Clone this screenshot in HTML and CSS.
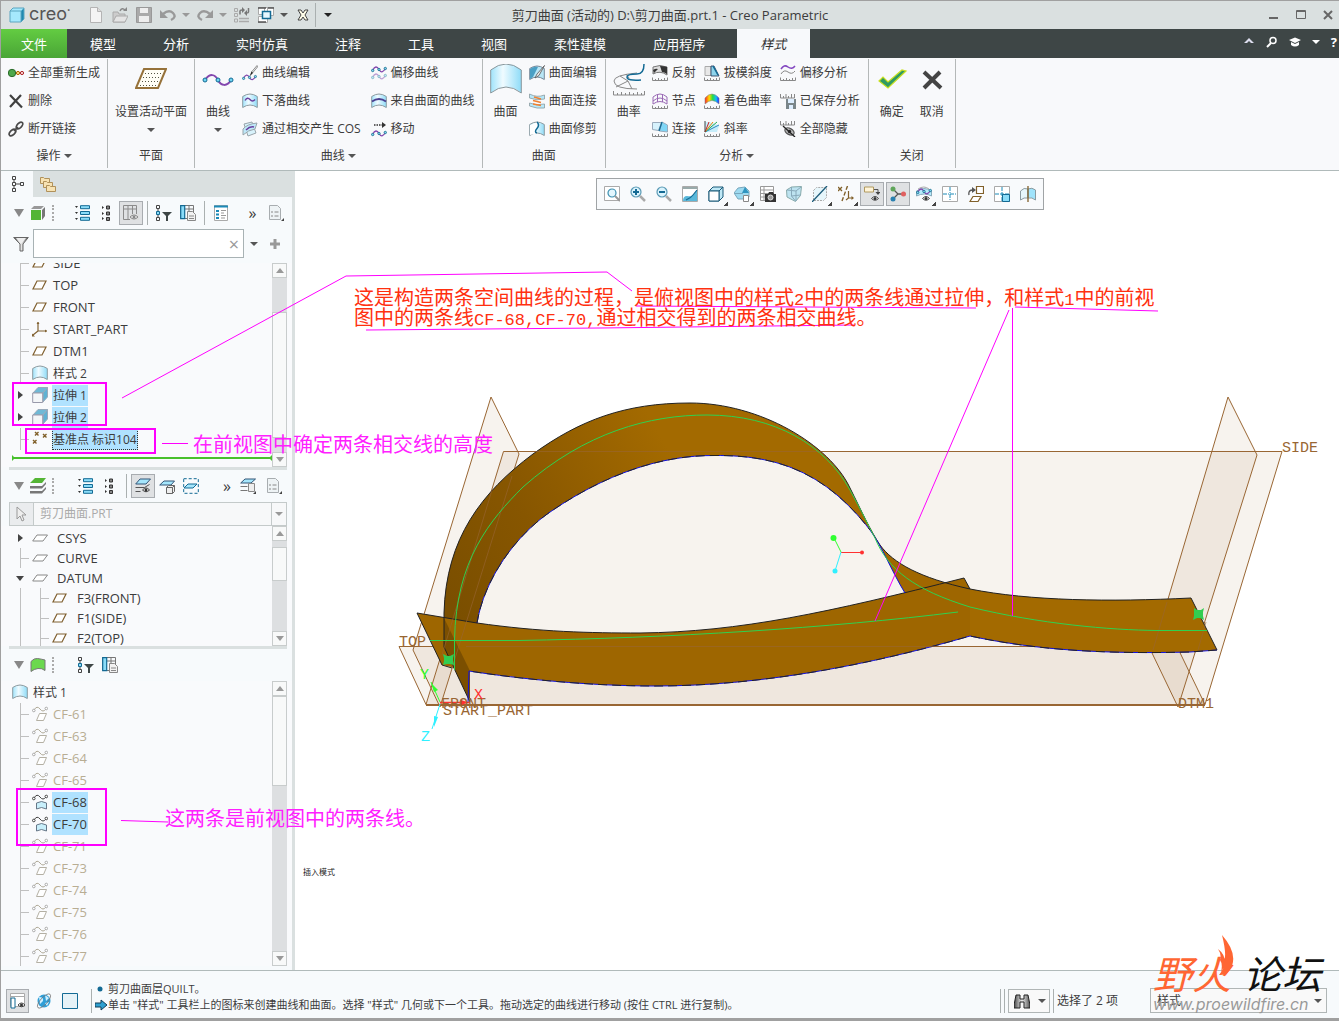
FILE: index.html
```html
<!DOCTYPE html>
<html lang="zh-CN">
<head>
    <meta charset="UTF-8">
    <meta name="viewport" content="width=device-width, initial-scale=1.0">
    <title>剪刀曲面 - Creo Parametric</title>
    <link rel="stylesheet" href="styles.css">
</head>
<body>

<!-- icones -->
<svg class="defs" width="0" height="0" aria-hidden="true">
    <defs>
        <linearGradient id="g-blue"><stop offset="0" stop-color="#9fe3fb"/><stop offset=".4" stop-color="#f0fbff"/><stop offset="1" stop-color="#8fdcf8"/></linearGradient>
        <linearGradient id="g-arch" gradientUnits="userSpaceOnUse" x1="450" y1="600" x2="680" y2="470"><stop offset="0" stop-color="#7b4f00"/><stop offset=".4" stop-color="#875600"/><stop offset="1" stop-color="#a36a00"/></linearGradient>
        <linearGradient id="g-rain"><stop offset="0" stop-color="#f22"/><stop offset=".3" stop-color="#fd0"/><stop offset=".55" stop-color="#2d4"/><stop offset=".8" stop-color="#1bf"/><stop offset="1" stop-color="#22f"/></linearGradient>
        <linearGradient id="g-metal"><stop offset="0" stop-color="#444"/><stop offset=".5" stop-color="#eee"/><stop offset="1" stop-color="#555"/></linearGradient>

        <symbol id="ruler" viewBox="0 0 16 16"><path d="M.5 12.500v3h15v-3M3.500 14v1M6.500 13v2M9.500 14v1M12.500 13v2" fill="none" stroke="#888"/></symbol>
        <symbol id="eye" viewBox="0 0 16 16"><path d="M1 8q7-8 14 0q-7 7-14 0z" fill="#fff" stroke="#444" stroke-width="2"/><circle cx="8" cy="8" r="3" fill="#333"/></symbol>
        <symbol id="wave" viewBox="0 0 16 8"><path d="M1.500 5.500C4 1 6 1 8 4.500S12 7.500 14.500 3.500" fill="none" stroke="#8347ae" stroke-width="1.300"/><g fill="#7fd8ee" stroke="#17688c" stroke-width=".8"><circle cx="1.700" cy="5.500" r="1.200"/><circle cx="8" cy="4.500" r="1.200"/><circle cx="14.300" cy="3.500" r="1.200"/></g></symbol>

        <symbol id="cube" viewBox="0 0 16 16"><path d="M1 4l3-3h11v11l-3 3H1z" fill="#a5e9fd"/><path d="M12 4l3-3v11l-3 3z" fill="#1f89b0"/><path d="M1 4h11v11H1zL4 1h11v11l-3 3" fill="none" stroke="#5aa5c0"/></symbol>
        <symbol id="new" viewBox="0 0 16 16"><path d="M2.500.5h7l4 4v11h-11z" fill="#f4f4f4" stroke="#b4b4b4"/><path d="M9.500.5v4h4" fill="#ddd" stroke="#b4b4b4"/></symbol>
        <symbol id="open" viewBox="0 0 16 16"><path d="M1 15V5h5l1 2h6v8z" fill="#ccc" stroke="#aaa"/><path d="M1 15l3-6h12l-3 6z" fill="#e4e4e4" stroke="#aaa"/><path d="M8 4q2-4 5-1" fill="none" stroke="#888" stroke-width="1.500"/><path d="M11 4h4V0z" fill="#888"/></symbol>
        <symbol id="save" viewBox="0 0 16 16"><path d="M.5.5h15v15H.5z" fill="#aaa" stroke="#999"/><path d="M4 1h8v5H4zM3 9h10v6H3z" fill="#eee"/></symbol>
        <symbol id="undo" viewBox="0 0 16 16"><path d="M3 7q6-5 10-1t-2 7" fill="none" stroke="#999" stroke-width="2.400"/><path d="M0 3v8h8z" fill="#999"/></symbol>
        <symbol id="redo" viewBox="0 0 16 16"><path d="M13 7q-6-5-10-1t2 7" fill="none" stroke="#999" stroke-width="2.400"/><path d="M16 3v8H8z" fill="#999"/></symbol>
        <symbol id="regenlist" viewBox="0 0 16 16"><path d="M.5 1.500h3v3h-3zM.5 6.500h3v3h-3zM.5 12h3v3h-3z" fill="none" stroke="#aaa"/><path d="M5 11.500h10M5 14.500h10" stroke="#aaa" stroke-width="1.500"/><path d="M6 7.500V4q0-1 2-1M14.500 1v4q0 1-2 1" fill="none" stroke="#777" stroke-width="1.500"/><path d="M8 0v6l3-3zM13 3v6l-3-3z" fill="#777"/></symbol>
        <symbol id="windows" viewBox="0 0 16 16"><path d="M6.500.5h9v8h-9zM.5.5h9v7h-9zM.5 9.500h9v6h-9z" fill="#fff" stroke="#aaa"/><path d="M10 1h6M0 1h8M0 15h8" stroke="#555" stroke-width="1.500"/><path d="M4.500 4.500h8v7h-8z" fill="#e6f7ff" stroke="#136a94" stroke-width="1.500"/></symbol>
        <symbol id="closex" viewBox="0 0 16 16"><path d="M3 3h3l2 3 2-3h3l-3 5 3 5h-3l-2-3-2 3H3l3-5z" fill="#fffde8" stroke="#444"/></symbol>

        <symbol id="regen" viewBox="0 0 16 16"><circle cx="4" cy="8" r="3.700" fill="#4ea84a" stroke="#2a6a2a"/><circle cx="10" cy="8" r="1.600" fill="#fd8" stroke="#a60"/><circle cx="14" cy="8" r="1.600" fill="#fdd" stroke="#a22"/></symbol>
        <symbol id="del" viewBox="0 0 16 16"><path d="M2 2l12 12.500M13 2L2 14" stroke="#404040" stroke-width="2.200" fill="none"/></symbol>
        <symbol id="unlink" viewBox="0 0 16 16"><g fill="none" stroke="#4a4a4a" stroke-width="1.700"><ellipse cx="11.500" cy="4.500" rx="4" ry="2.300" transform="rotate(-45 11.500 4.500)"/><ellipse cx="4.500" cy="11.500" rx="4" ry="2.300" transform="rotate(-45 4.500 11.500)"/><path d="M6 10l4-4"/></g></symbol>
        <symbol id="cedit" viewBox="0 0 16 16"><path d="M15 .5L9.500 7l1 1L15.500 2z" fill="#eee" stroke="#777" stroke-width=".8"/><path d="M9.500 6.500l1.500 1.500-3.500 3.500z" fill="#222"/><use href="#wave" y="8" width="15" height="8"/></symbol>
        <symbol id="surf" viewBox="0 0 16 16"><path d="M.7 3.500Q8-1.500 15.300 3.500V14.500Q8 9.500.7 14.500z" fill="url(#g-blue)" stroke="#8d9a9f"/></symbol>
        <symbol id="drop" viewBox="0 0 16 16"><use href="#surf"/><path d="M3 7.500q2.500-4 5-1t5 0" fill="none" stroke="#6a3fa0" stroke-width="1.400"/></symbol>
        <symbol id="cos" viewBox="0 0 16 16"><path d="M2 3l8-2 4 11-8 3z" fill="#d8f2fb" stroke="#99a4aa"/><path d="M1 8Q5 3 15 2L13 8Q6 9 1 14z" fill="#bde8f8" stroke="#99a4aa"/><path d="M4 9q4-4 8-3" fill="none" stroke="#6a3fa0" stroke-width="1.400"/></symbol>
        <symbol id="offset" viewBox="0 0 16 16"><use href="#wave" width="16" height="8"/><use href="#wave" width="16" height="8" y="7" opacity=".5"/></symbol>
        <symbol id="fromsurf" viewBox="0 0 16 16"><use href="#surf"/><path d="M1 8.500q7-5 14 0" fill="none" stroke="#4a3f90" stroke-width="1.800"/></symbol>
        <symbol id="move" viewBox="0 0 16 16"><path d="M3 4h8" stroke="#333" stroke-width="1.600" stroke-dasharray="1.500 1"/><path d="M11 1l4 3-4 3z" fill="#333"/><use href="#wave" y="8" width="16" height="8"/></symbol>
        <symbol id="sedit" viewBox="0 0 16 16"><path d="M.7 3.500Q8-1.500 15.300 3.500V14.500Q8 9.500.7 14.500z" fill="#b8e6f6" stroke="#789"/><path d="M1 4Q5 1 9 2L4 12l-3 2z" fill="#4a9fc4"/><path d="M15.500.5L8 9l-2 4 4-2.500z" fill="#e6e6e6" stroke="#555" stroke-width=".8"/></symbol>
        <symbol id="sconn" viewBox="0 0 16 16"><path d="M.5 1Q8 5 15.500 2v4Q8 8 .5 5zM.5 10q7 3 15 1v4Q8 16 .5 13z" fill="#b7e9fa" stroke="#8a9aa0" stroke-width=".8"/><path d="M5 4l7 2M4 7.500l8 2M4 11l8 1.500" stroke="#f08030" stroke-width="1.500"/></symbol>
        <symbol id="strim" viewBox="0 0 16 16"><use href="#surf"/><path d="M8 1.500q3 3 0 6t0 5l-7 1.500V4z" fill="#fff"/><path d="M8 1q3 3 0 6.500T8 12" fill="none" stroke="#136a94" stroke-width="1.500"/></symbol>
        <symbol id="refl" viewBox="0 0 16 16"><path d="M1 2Q8-1 15 2v8Q8 5 1 9z" fill="#ddd" stroke="#777"/><path d="M8 1q4 0 7 1v7q-3-2-5-2zM1 5q3-2 5-1L2 8z" fill="#333"/><use href="#ruler"/></symbol>
        <symbol id="node" viewBox="0 0 16 16"><path d="M1 4q7-6 14 0M1 8q7-6 14 0M1 11q7-5 14 0M1 4v7M5.500 2v7M10.500 2v7M15 4v7" fill="none" stroke="#9a6ab5"/><use href="#ruler"/></symbol>
        <symbol id="conn" viewBox="0 0 16 16"><path d="M.5 1.500h9l-3 8-6-1z" fill="#d6f2fc" stroke="#9ab"/><path d="M10 1l5.500 3v7l-8-1z" fill="#7fd6f6" stroke="#9ab"/><path d="M10 1L7 10" stroke="#136a94" stroke-width="1.300"/><use href="#ruler"/></symbol>
        <symbol id="draft" viewBox="0 0 16 16"><path d="M1 10.500V1.500h6v9z" fill="#e8e8e8" stroke="#aaa"/><path d="M7 1h3l5 10H7z" fill="#8fd4ec" stroke="#235" stroke-width=".8"/><path d="M9 1l5 9" stroke="#136a94" stroke-width="1.500"/><use href="#ruler"/></symbol>
        <symbol id="shade" viewBox="0 0 16 16"><path d="M1 5Q8-3 15 5v6Q8 4 1 11z" fill="url(#g-rain)" stroke="#888" stroke-width=".6"/><use href="#ruler"/></symbol>
        <symbol id="slope" viewBox="0 0 16 16"><path d="M1 11V1q8 0 14 4l-2 6z" fill="#c7edfa"/><path d="M1 11L15 4" stroke="#2a8ac0"/><path d="M1 11L13 1" stroke="#2a5"/><path d="M1 11L9 1" stroke="#e80"/><path d="M1 11L5 1" stroke="#c22"/><path d="M1 0v11" stroke="#444" fill="none"/><use href="#ruler"/></symbol>
        <symbol id="offan" viewBox="0 0 16 16"><path d="M1 4q3-5 7-2t7-1" fill="none" stroke="#8347c0" stroke-width="1.500"/><path d="M1 9q3-5 7-2t7-1" fill="none" stroke="#888"/><use href="#ruler"/></symbol>
        <symbol id="saved" viewBox="0 0 16 16"><path d="M.5 1v4h14V1M3.500 3v2M6 1v4M8.500 3v2M11.500 1v4" fill="none" stroke="#888"/><path d="M6 6h10v10H6z" fill="#7a868a"/><path d="M8 6h6v4H8zM9 12h4v4H9z" fill="#def"/></symbol>
        <symbol id="hideall" viewBox="0 0 16 16"><path d="M.5 0v4h14V0M3.500 2v2M6 0v4M8.500 2v2M11.500 0v4" fill="none" stroke="#888"/><ellipse cx="9.500" cy="10.500" rx="5" ry="3" transform="rotate(30 9.500 10.500)" fill="#bbb" stroke="#555" stroke-width="1.300"/><circle cx="9.500" cy="10.500" r="1.700" fill="#222"/><path d="M3 5l12 11" stroke="#222" stroke-width="1.300"/></symbol>

        <symbol id="tree" viewBox="0 0 16 16"><path d="M2.500 0.500h3v3h-3zM2.500 6.500h3v3h-3zM2.500 12.500h3v3h-3zM10.500 6.500h3v3h-3zM4 4v2M4 10v2M6 8h4" fill="none" stroke="#444"/></symbol>
        <symbol id="folders" viewBox="0 0 16 16"><g fill="#f7e2b2" stroke="#b0915a"><path d="M.5 1.500h3l1 1h5v5h-9z"/><path d="M3.500 5.500h3l1 1h5v5h-9z"/><path d="M6.500 9.500h3l1 1h5v5h-9z"/></g></symbol>
        <symbol id="gcube" viewBox="0 0 16 16"><path d="M1 5h10v10H1z" fill="#54b535"/><path d="M1 4l3-3h10l-3 3z" fill="#999"/><path d="M12 5l3-3v9l-3 4z" fill="#777"/></symbol>
        <symbol id="list" viewBox="0 0 16 16"><path d="M0 1h3L1.500 3zM0 7h3L1.500 9zM0 13h3l-1.500 2z" fill="#333"/><path d="M5.500.7h9v3h-9zM5.500 6.500h9v3h-9zM5.500 12.300h9v3h-9z" fill="#8adcf8" stroke="#136a94"/></symbol>
        <symbol id="dots" viewBox="0 0 16 16"><path d="M3 1l2 1.500L3 4zM3 7l2 1.500L3 10zM3 12l2 1.500L3 15z" fill="#333"/><path d="M7.500 1h3v3h-3zM7.500 7h3v3h-3zM7.500 12.500h3v3h-3z" fill="#888" stroke="#333"/></symbol>
        <symbol id="colseye" viewBox="0 0 16 16"><path d="M.5.5h13v14H.5zM.5 4h13M5 .5v14M9.500.5v14" fill="none" stroke="#8b8b8b"/><path d="M7 9h9v6H7z" fill="#ddd"/><path d="M7 12q4-4 8 0q-4 4-8 0z" fill="#eee" stroke="#888"/><circle cx="11" cy="12" r="1.500" fill="#888"/></symbol>
        <symbol id="tfilter" viewBox="0 0 16 16"><path d="M.5.5h3v3h-3zM.5 12.500h3v3h-3zM2 4v8" fill="none" stroke="#444"/><path d="M.5 6.500h3v3h-3z" fill="#8adcf8" stroke="#136a94"/><path d="M6 7h10l-4 4v5h-2v-5z" fill="#3e4646"/></symbol>
        <symbol id="colsdoc" viewBox="0 0 16 16"><path d="M.5.5h13v13H.5zM.5 4h13M9 .5v13" fill="none" stroke="#777"/><path d="M.7.7h4v13h-4z" fill="#8adcf8" stroke="#136a94" stroke-width="1.200"/><path d="M7.500 6.500h5l3 3v6h-8z" fill="#f2f2f2" stroke="#888"/><path d="M9 11h5M9 13.500h5" stroke="#888"/></symbol>
        <symbol id="props" viewBox="0 0 16 16"><path d="M1.500.5h13v15h-13z" fill="#fff" stroke="#aaa"/><path d="M1 1.500h14" stroke="#1b8ab8" stroke-width="2"/><path d="M3 5h3v2H3zM3 8.500h3v2H3zM3 12h3v2H3z" fill="#1b8ab8"/><path d="M8 5.500h5M8 8h3M8 10.500h5M8 13h4" stroke="#999"/></symbol>
        <symbol id="doc" viewBox="0 0 16 16"><path d="M1.500.5h8l3 3v11h-11z" fill="#eef3f5" stroke="#a8adb0"/><path d="M3 7h2M3 11h2M6.500 7h4M6.500 11h4" stroke="#888"/><path d="M16 13v3h-3z" fill="#444"/></symbol>
        <symbol id="funnel" viewBox="0 0 16 16"><path d="M.7 1.500h14.600L10 8v7H7V8z" fill="url(#g-metal)" stroke="#666"/><path d="M3 2h10l-4 5H7z" fill="#eee"/></symbol>
        <symbol id="plane" viewBox="0 0 16 16"><path d="M5 4h9l-4 8H1z" fill="#fff" stroke="#806030" stroke-width="1.200"/></symbol>
        <symbol id="csys" viewBox="0 0 16 16"><path d="M6 1v9h9M6 10l-5 4" fill="none" stroke="#806030" stroke-width="1.200"/><path d="M4.500 3L6 1l1.500 2zM13 8.500l2 1.500-2 1.500zM0 12.500v3h3z" fill="#806030"/></symbol>
        <symbol id="extr" viewBox="0 0 16 16"><path d="M1 6l5-5.500h9.500L11 6z" fill="#6fb9d6" stroke="#9ab"/><path d="M11 6l4.500-5.500V10L11 15z" fill="#5fb2d3" stroke="#9ab"/><path d="M.7 6h10v9.500H.7z" fill="#f4f6f8" stroke="#99a"/></symbol>
        <symbol id="pts" viewBox="0 0 16 16"><path d="M3 1l3.500 3.500M6.500 1L3 4.500M11 3l3.500 3.500M14.500 3L11 6.500M1 9l3.500 3.500M4.500 9L1 12.500" stroke="#80602a" stroke-width="1.400"/></symbol>
        <symbol id="layer" viewBox="0 0 16 16"><path d="M5 5h10.500L11 11H.7z" fill="#fff" stroke="#888"/></symbol>
        <symbol id="cf" viewBox="0 0 16 16"><path d="M2 4Q5-1 8 3T14 3" fill="none" stroke="#b0aa98"/><circle cx="1.800" cy="4.500" r="1.300" fill="#fff" stroke="#a9a9a9"/><circle cx="14.300" cy="2.500" r="1.300" fill="#fff" stroke="#a9a9a9"/><path d="M7.500 7.500h7l-3 7h-7z" fill="#fff" stroke="#b4b0a4"/></symbol>
        <symbol id="cfon" viewBox="0 0 16 16"><path d="M2 4Q5-1 8 3T14 3" fill="none" stroke="#444"/><circle cx="1.800" cy="4.500" r="1.300" fill="#fff" stroke="#444"/><circle cx="14.300" cy="2.500" r="1.300" fill="#fff" stroke="#444"/><path d="M4.500 9q5-3 10 0v6q-5-3-10 0z" fill="#c8effb" stroke="#678"/></symbol>
        <symbol id="layersg" viewBox="0 0 16 16"><path d="M5 0h11l-4 5H0z" fill="#54b535"/><path d="M0 8h12l4-4v2l-4 4.500H0zM0 13h12l4-4v2l-4 4.500H0z" fill="#777"/></symbol>
        <symbol id="layeye" viewBox="0 0 16 16"><path d="M5 1h10.500L11 6H.7z" fill="#a5e6fc" stroke="#357"/><path d="M.5 9.500h9l5-3M.5 13.500h5" fill="none" stroke="#555"/><use href="#eye" x="6" y="8" width="10" height="8"/></symbol>
        <symbol id="laycube" viewBox="0 0 16 16"><path d="M5 3h10.500L12 7H.7z" fill="#a5e6fc" stroke="#357"/><path d="M7.500 9.500h6v6h-6zl2-2h6v6l-2 2M13.500 9.500l2-2" fill="#eee" stroke="#666"/></symbol>
        <symbol id="laysel" viewBox="0 0 16 16"><path d="M.7.7h14.600v14.600H.7z" fill="none" stroke="#136a94" stroke-dasharray="3 2"/><path d="M5 6h9l-4 4H1z" fill="#a5e6fc" stroke="#136a94"/></symbol>
        <symbol id="laydoc" viewBox="0 0 16 16"><path d="M5 1h10.500L11 5H.7z" fill="#a5e6fc" stroke="#357"/><path d="M.5 8.500h7M.5 12.500h7" stroke="#777"/><path d="M8.500 5.500h6v8h-6z" fill="#eee" stroke="#888"/><path d="M16 13v3h-3z" fill="#444"/></symbol>
        <symbol id="gsurf" viewBox="0 0 16 16"><path d="M1 4.500Q4 1 7.500 1.500T15 3v10.500q-3-2.500-7-2t-7 3z" fill="#6bd84e" stroke="#777"/></symbol>
        <symbol id="cursor" viewBox="0 0 16 16"><path d="M4 1v12l3-3 2 5 2-1-2-5h4z" fill="#eee" stroke="#999"/></symbol>

        <symbol id="vfit" viewBox="0 0 16 16"><path d="M.5.5h15v14H.5z" fill="#fff" stroke="#aaa"/><circle cx="8" cy="7" r="4" fill="#e3f6fd" stroke="#3b8fb0" stroke-width="1.200"/><path d="M11 10l5 5" stroke="#999" stroke-width="2"/></symbol>
        <symbol id="vin" viewBox="0 0 16 16"><circle cx="6" cy="6" r="5" fill="#d9f3fd" stroke="#5a9ab5" stroke-width="1.200"/><path d="M3 6h6M6 3v6" stroke="#136a94" stroke-width="2"/><path d="M10 10l5 5" stroke="#aaa" stroke-width="2.500"/></symbol>
        <symbol id="vout" viewBox="0 0 16 16"><circle cx="6" cy="6" r="5" fill="#d9f3fd" stroke="#5a9ab5" stroke-width="1.200"/><path d="M3 6h6" stroke="#136a94" stroke-width="2"/><path d="M10 10l5 5" stroke="#aaa" stroke-width="2.500"/></symbol>
        <symbol id="vpaint" viewBox="0 0 16 16"><path d="M.5.5h15v15H.5z" fill="#fff" stroke="#aaa"/><path d="M1 1h14v2H1z" fill="#9aa"/><path d="M15 4v11H1q0-5 4-5 4 1 6-1z" fill="#5ab8da"/><path d="M4 14q5-2 7-5l4-5" stroke="#136a94" fill="none" stroke-width="1.200"/></symbol>
        <symbol id="vbox" viewBox="0 0 16 16"><path d="M1 5h10v10H1zL5 1h10v10l-4 4M11 5l4-4" fill="#bfe8f6" stroke="#1b5a78"/><path d="M1 5h10v10H1z" fill="#fff" stroke="#1b5a78"/></symbol>
        <symbol id="vsaved" viewBox="0 0 16 16"><path d="M0 7l4-5 7-1 4 4v6l-4 2H4z" fill="#9edaf0" stroke="#7aa8bd"/><path d="M0 7.500h9" stroke="#7aa8bd"/><path d="M11 1l4 6H8z" fill="#2f95c0"/><path d="M9.500 9.500h5v6h-5z" fill="#fff" stroke="#888"/></symbol>
        <symbol id="vcam" viewBox="0 0 16 16"><path d="M.5.5h13v14H.5zM.5 4h13M.5 7.500h13M.5 11h13M4 .5v14" fill="#fff" stroke="#999"/><path d="M5 8h3l1-2h4l1 2h2v8H5z" fill="#333"/><circle cx="10.500" cy="11.500" r="2.500" fill="#999" stroke="#ddd"/></symbol>
        <symbol id="vpersp" viewBox="0 0 16 16"><path d="M.5 4l5-3 10-.5-1 9-5 6L1 11z" fill="#bde3f0" stroke="#8aa"/><path d="M1 4l9 1v10M10 5l5-4M5.500 1v9l4 5M5.500 10l9-1" fill="none" stroke="#8ab"/></symbol>
        <symbol id="vsec" viewBox="0 0 16 16"><path d="M1.500 4.500l3-3h10v10l-3 3h-10z" fill="#e6f6fb" stroke="#aaa" stroke-dasharray="2 1"/><path d="M0 16L15 0" stroke="#1b5a78" stroke-width="1.300"/></symbol>
        <symbol id="vdatum" viewBox="0 0 16 16"><path d="M0 1l4 4M4 1L0 5" stroke="#80602a" stroke-width="1.300"/><path d="M9.500 0L4 15" stroke="#80602a" stroke-width="1.400" stroke-dasharray="4 2"/><path d="M10.500 5v7H15M10.500 12L8 14" fill="none" stroke="#80602a" stroke-width="1.200"/><path d="M13.500 10l2.500 2-2.500 2z" fill="#80602a"/></symbol>
        <symbol id="vannot" viewBox="0 0 16 16"><path d="M.5 1h9v5h-9z" fill="#fff4d8" stroke="#b09a60"/><path d="M10 3.500h4V7" fill="none" stroke="#555"/><path d="M11.500 6h5L14 9z" fill="#444"/><use href="#eye" x="6" y="8.500" width="10" height="8"/></symbol>
        <symbol id="vspin" viewBox="0 0 16 16"><path d="M3 3l5 5-5 5M8 8h5" stroke="#555" stroke-width="1.300" fill="none"/><circle cx="3" cy="3" r="2.500" fill="#5fa55a"/><circle cx="3" cy="13" r="2.500" fill="#2a80b0"/><circle cx="13.500" cy="8" r="2.500" fill="#e06060"/></symbol>
        <symbol id="vdisp" viewBox="0 0 16 16"><path d="M2 3Q8-1 13 3" fill="none" stroke="#aaa"/><path d="M.5 5q7-5 15 0v5q-7-4-15 0z" fill="#b6ecfd" stroke="#8ab"/><use href="#wave" y="1" width="16" height="8"/><use href="#eye" x="5" y="8.500" width="10" height="8"/></symbol>
        <symbol id="vgrid" viewBox="0 0 16 16"><path d="M.5.5h15v15H.5z" fill="#fff" stroke="#aaa"/><path d="M8 1v14M1 8h14" stroke="#1b8ab8" stroke-dasharray="4 1 1 1"/></symbol>
        <symbol id="vrot" viewBox="0 0 16 16"><path d="M8.500.5h7v7h-7zM5 10.500h8l-3 5H2z" fill="#fff" stroke="#80602a" stroke-width="1.200"/><path d="M1 9q-1-5 4-5" fill="none" stroke="#555" stroke-width="1.300"/><path d="M4 1l4 3-4 3z" fill="#555"/></symbol>
        <symbol id="vgrid4" viewBox="0 0 16 16"><path d="M.5.5h15v15H.5z" fill="#fff" stroke="#aaa"/><path d="M9 9h6v6H9z" fill="#8adcf8"/><path d="M8 1v14M1 8h14" stroke="#1b8ab8" stroke-dasharray="4 1"/><path d="M8.500 8.500h7v7h-7z" fill="none" stroke="#136a94"/></symbol>
        <symbol id="vmirror" viewBox="0 0 16 16"><path d="M.5 5Q4 1 8 3v9q-4-1-7.500 2z" fill="#e6f6fb" stroke="#8a9aa0"/><path d="M8 3q4-2 7.500 1v10Q12 11 8 12z" fill="#9fe3fb" stroke="#8a9aa0"/><path d="M8 0v16" stroke="#80602a" stroke-width="1.300"/></symbol>
    </defs>
</svg>

<header class="titlebar">
    <div class="quick">
        <svg class="i"><use href="#cube"/></svg>
        <span class="brand">creo<sup>•</sup></span>
        <button aria-label="新建"><svg class="i"><use href="#new"/></svg></button>
        <button aria-label="打开"><svg class="i"><use href="#open"/></svg></button>
        <button aria-label="保存"><svg class="i"><use href="#save"/></svg></button>
        <button aria-label="撤消"><svg class="i"><use href="#undo"/></svg></button>
        <i class="down gray"></i>
        <button aria-label="重做"><svg class="i"><use href="#redo"/></svg></button>
        <i class="down gray"></i>
        <button aria-label="重新生成"><svg class="i"><use href="#regenlist"/></svg></button>
        <button aria-label="窗口"><svg class="i"><use href="#windows"/></svg></button>
        <i class="down"></i>
        <button aria-label="关闭"><svg class="i"><use href="#closex"/></svg></button>
        <i class="bar"></i>
        <i class="down over"></i>
    </div>
    <h1>剪刀曲面 (活动的) D:\剪刀曲面.prt.1 - Creo Parametric</h1>
    <div class="winbtns">
        <button aria-label="最小化"><svg width="10" height="10"><path d="M0 8h9" stroke="#666" stroke-width="2"/></svg></button>
        <button aria-label="最大化"><svg width="10" height="10"><path d="M.5.5h9v8h-9zM0 1.500h10" fill="none" stroke="#666"/></svg></button>
        <button aria-label="关闭窗口"><svg width="10" height="10"><path d="M1 1l8 8M9 1L1 9" stroke="#666" stroke-width="2"/></svg></button>
    </div>
</header>

<nav class="tabs">
    <button class="file">文件</button>
    <button>模型</button>
    <button>分析</button>
    <button>实时仿真</button>
    <button>注释</button>
    <button>工具</button>
    <button>视图</button>
    <button>柔性建模</button>
    <button>应用程序</button>
    <button class="active">样式</button>
    <div class="help">
        <svg width="12" height="12"><path d="M1 7l5-5 5 5H8L6 5 4 7z" fill="#dde"/></svg>
        <svg width="12" height="12"><circle cx="7" cy="4.500" r="3" fill="none" stroke="#fff" stroke-width="1.500"/><path d="M5 7l-4 4" stroke="#fff" stroke-width="2"/></svg>
        <svg width="12" height="12"><path d="M0 4l6-2.500L12 4 6 7zM2 6l4 2 4-2v3q-4 3-8 0z" fill="#fff"/></svg>
        <i class="down white"></i>
        <b>?</b>
    </div>
</nav>

<div class="ribbon">
    <section class="group g-op">
        <div class="tools">
            <div class="col">
                <button><svg class="i"><use href="#regen"/></svg>全部重新生成</button>
                <button><svg class="i"><use href="#del"/></svg>删除</button>
                <button><svg class="i"><use href="#unlink"/></svg>断开链接</button>
            </div>
        </div>
        <h2>操作<i class="down"></i></h2>
    </section>
    <section class="group g-plane">
        <div class="tools">
            <button class="big"><svg width="32" height="32"><path d="M9 5h22l-8 19H1z" fill="#fffef5" stroke="#96723a" stroke-width="2"/><path d="M10 9.500h17M8 13.500h17M7 17.500h17M5 21.500h17" stroke="#554" stroke-dasharray="1 2" fill="none"/></svg>设置活动平面<i class="down"></i></button>
        </div>
        <h2>平面</h2>
    </section>
    <section class="group g-curve">
        <div class="tools">
            <button class="big"><svg width="32" height="32"><path d="M3 16C8 9 13 10 16 16S25 23 29 16" fill="none" stroke="#8347ae" stroke-width="2"/><g fill="#6fd4f0" stroke="#136a94"><circle cx="3" cy="16" r="2"/><circle cx="16" cy="16" r="2"/><circle cx="29" cy="16" r="2"/></g></svg>曲线<i class="down"></i></button>
            <div class="col">
                <button><svg class="i"><use href="#cedit"/></svg>曲线编辑</button>
                <button><svg class="i"><use href="#drop"/></svg>下落曲线</button>
                <button><svg class="i"><use href="#cos"/></svg>通过相交产生 COS</button>
            </div>
            <div class="col">
                <button><svg class="i"><use href="#offset"/></svg>偏移曲线</button>
                <button><svg class="i"><use href="#fromsurf"/></svg>来自曲面的曲线</button>
                <button><svg class="i"><use href="#move"/></svg>移动</button>
            </div>
        </div>
        <h2>曲线<i class="down"></i></h2>
    </section>
    <section class="group g-surf">
        <div class="tools">
            <button class="big"><svg width="32" height="32"><path d="M.7 6Q16-6 31.300 6V29Q16 17 .7 29z" fill="url(#g-blue)" stroke="#8a979c"/></svg>曲面</button>
            <div class="col">
                <button><svg class="i"><use href="#sedit"/></svg>曲面编辑</button>
                <button><svg class="i"><use href="#sconn"/></svg>曲面连接</button>
                <button><svg class="i"><use href="#strim"/></svg>曲面修剪</button>
            </div>
        </div>
        <h2>曲面</h2>
    </section>
    <section class="group g-ana">
        <div class="tools">
            <button class="big"><svg width="32" height="32"><path d="M24 9Q1 11 1 17q0 8 23 8M7 12l8 5M3 23l12-6M15 17l4 8M13 10l3 4" fill="none" stroke="#888"/><path d="M31 0q0 10-7 10-10 0-10 3 0 4 14 3" fill="none" stroke="#136a94" stroke-width="1.500"/><path d="M.5 27v4h31v-4M4.500 29v2M8.500 28v3M12.500 29v2M16.500 28v3M20.500 29v2M24.500 28v3M28.500 29v2" fill="none" stroke="#888"/></svg>曲率</button>
            <div class="col">
                <button><svg class="i"><use href="#refl"/></svg>反射</button>
                <button><svg class="i"><use href="#node"/></svg>节点</button>
                <button><svg class="i"><use href="#conn"/></svg>连接</button>
            </div>
            <div class="col">
                <button><svg class="i"><use href="#draft"/></svg>拔模斜度</button>
                <button><svg class="i"><use href="#shade"/></svg>着色曲率</button>
                <button><svg class="i"><use href="#slope"/></svg>斜率</button>
            </div>
            <div class="col">
                <button><svg class="i"><use href="#offan"/></svg>偏移分析</button>
                <button><svg class="i"><use href="#saved"/></svg>已保存分析</button>
                <button><svg class="i"><use href="#hideall"/></svg>全部隐藏</button>
            </div>
        </div>
        <h2>分析<i class="down"></i></h2>
    </section>
    <section class="group g-close">
        <div class="tools">
            <button class="big"><svg width="32" height="32"><path d="M3 17l4-4 5 5L26 6l4 1-18 17z" fill="#2f9a63" stroke="#c8e020" stroke-width="1.200"/></svg>确定</button>
            <button class="big"><svg width="32" height="32"><path d="M8 8l17 16M24 8L8 24" stroke="#444" stroke-width="4"/></svg>取消</button>
        </div>
        <h2>关闭</h2>
    </section>
</div>

<main>
    <aside>
        <div class="sidetabs">
            <button class="on" aria-label="模型树"><svg class="i"><use href="#tree"/></svg></button>
            <button aria-label="文件夹"><svg class="i"><use href="#folders"/></svg></button>
        </div>
        <div class="panels">
            <div class="bar-tools">
                <i class="down tri"></i>
                <svg class="i"><use href="#gcube"/></svg><i class="grip"></i>
                <button aria-label="展开"><svg class="i"><use href="#list"/></svg></button>
                <button aria-label="折叠"><svg class="i"><use href="#dots"/></svg></button>
                <button class="on" aria-label="树列"><svg class="i"><use href="#colseye"/></svg></button>
                <i class="bar"></i>
                <button aria-label="树过滤器"><svg class="i"><use href="#tfilter"/></svg></button>
                <button aria-label="列设置"><svg class="i"><use href="#colsdoc"/></svg></button>
                <i class="bar"></i>
                <button aria-label="属性"><svg class="i"><use href="#props"/></svg></button>
                <span class="more">»</span>
                <button aria-label="设置"><svg class="i"><use href="#doc"/></svg></button>
            </div>
            <div class="search">
                <svg class="i"><use href="#funnel"/></svg>
                <div class="box"><input type="text" aria-label="搜索"><button aria-label="清除">×</button></div>
                <i class="down"></i>
                <button class="plus" aria-label="添加"><svg width="12" height="12"><path d="M6 1v10M1 6h10" stroke="#999" stroke-width="3"/></svg></button>
            </div>

            <div class="pane pane1">
                <ul class="tree">
                    <li><i class="twig"></i><svg class="i"><use href="#plane"/></svg><span>SIDE</span></li>
                    <li><i class="twig"></i><svg class="i"><use href="#plane"/></svg><span>TOP</span></li>
                    <li><i class="twig"></i><svg class="i"><use href="#plane"/></svg><span>FRONT</span></li>
                    <li><i class="twig"></i><svg class="i"><use href="#csys"/></svg><span>START_PART</span></li>
                    <li><i class="twig"></i><svg class="i"><use href="#plane"/></svg><span>DTM1</span></li>
                    <li><i class="twig"></i><svg class="i"><use href="#surf"/></svg><span class="zh">样式 2</span></li>
                    <li><i class="twig closed"></i><svg class="i"><use href="#extr"/></svg><span class="zh sel">拉伸 1</span></li>
                    <li><i class="twig closed"></i><svg class="i"><use href="#extr"/></svg><span class="zh sel">拉伸 2</span></li>
                    <li><i class="twig"></i><svg class="i"><use href="#pts"/></svg><span class="zh sel focus">基准点 标识104</span></li>
                    <li class="insert"></li>
                </ul>
                <div class="scroll"><i class="btn up"></i><i class="thumb"></i><i class="btn dn"></i></div>
            </div>

            <div class="bar-tools split">
                <i class="down tri"></i>
                <svg class="i"><use href="#layersg"/></svg><i class="grip"></i>
                <button aria-label="展开层"><svg class="i"><use href="#list"/></svg></button>
                <button aria-label="折叠层"><svg class="i"><use href="#dots"/></svg></button>
                <i class="bar"></i>
                <button class="on" aria-label="层显示"><svg class="i"><use href="#layeye"/></svg></button>
                <button aria-label="层对象"><svg class="i"><use href="#laycube"/></svg></button>
                <button aria-label="选择层"><svg class="i"><use href="#laysel"/></svg></button>
                <span class="more">»</span>
                <button aria-label="层"><svg class="i"><use href="#laydoc"/></svg></button>
                <button class="last" aria-label="层设置"><svg class="i"><use href="#doc"/></svg></button>
            </div>
            <div class="path">
                <button aria-label="选择"><svg class="i"><use href="#cursor"/></svg></button>
                <select aria-label="模型" disabled><option>剪刀曲面.PRT</option></select>
                <i class="down gray"></i>
            </div>
            <div class="pane pane2">
                <ul class="tree">
                    <li><i class="twig closed"></i><svg class="i"><use href="#layer"/></svg><span>CSYS</span></li>
                    <li><i class="twig"></i><svg class="i"><use href="#layer"/></svg><span>CURVE</span></li>
                    <li><i class="twig opened"></i><svg class="i"><use href="#layer"/></svg><span>DATUM</span></li>
                    <li class="sub"><i class="twig"></i><svg class="i"><use href="#plane"/></svg><span>F3(FRONT)</span></li>
                    <li class="sub"><i class="twig"></i><svg class="i"><use href="#plane"/></svg><span>F1(SIDE)</span></li>
                    <li class="sub"><i class="twig"></i><svg class="i"><use href="#plane"/></svg><span>F2(TOP)</span></li>
                </ul>
                <div class="scroll"><i class="btn up"></i><i class="thumb"></i><i class="btn dn"></i></div>
            </div>

            <div class="bar-tools split">
                <i class="down tri"></i>
                <svg class="i"><use href="#gsurf"/></svg><i class="grip"></i>
                <button aria-label="过滤"><svg class="i"><use href="#tfilter"/></svg></button>
                <button aria-label="列"><svg class="i"><use href="#colsdoc"/></svg></button>
            </div>
            <div class="pane pane3">
                <ul class="tree">
                    <li class="root"><svg class="i"><use href="#surf"/></svg><span class="zh">样式 1</span></li>
                    <li class="dim"><i class="twig"></i><svg class="i"><use href="#cf"/></svg><span>CF-61</span></li>
                    <li class="dim"><i class="twig"></i><svg class="i"><use href="#cf"/></svg><span>CF-63</span></li>
                    <li class="dim"><i class="twig"></i><svg class="i"><use href="#cf"/></svg><span>CF-64</span></li>
                    <li class="dim"><i class="twig"></i><svg class="i"><use href="#cf"/></svg><span>CF-65</span></li>
                    <li><i class="twig"></i><svg class="i"><use href="#cfon"/></svg><span class="sel">CF-68</span></li>
                    <li><i class="twig"></i><svg class="i"><use href="#cfon"/></svg><span class="sel">CF-70</span></li>
                    <li class="dim"><i class="twig"></i><svg class="i"><use href="#cf"/></svg><span>CF-71</span></li>
                    <li class="dim"><i class="twig"></i><svg class="i"><use href="#cf"/></svg><span>CF-73</span></li>
                    <li class="dim"><i class="twig"></i><svg class="i"><use href="#cf"/></svg><span>CF-74</span></li>
                    <li class="dim"><i class="twig"></i><svg class="i"><use href="#cf"/></svg><span>CF-75</span></li>
                    <li class="dim"><i class="twig"></i><svg class="i"><use href="#cf"/></svg><span>CF-76</span></li>
                    <li class="dim"><i class="twig"></i><svg class="i"><use href="#cf"/></svg><span>CF-77</span></li>
                </ul>
                <div class="scroll"><i class="btn up"></i><i class="thumb"></i><i class="btn dn"></i></div>
            </div>
        </div>
    </aside>

    <div class="viewport">
        <svg class="scene" viewBox="295 171 1044 799" preserveAspectRatio="xMinYMin">
            <!-- planos -->
            <g class="fillp">
                <path d="M503 451H1282L1205 705H426z"/>
                <path d="M491 397L519 454 440 707 413 650z"/>
                <path d="M1228 397L1257 455 1178 707 1152 653z"/>
                <path d="M399 647H1177L1205 705H426z"/>
            </g>
            <g class="linep">
                <path d="M503.500 451.500H1282L1205 704.500H426z"/>
                <path d="M491 397L519 454 440 707 413 650z"/>
                <path d="M1228 397L1257 455 1178 707 1152 653z"/>
                <path d="M399 646.500H1177L1205 704.500H426z"/>
                <path d="M426 705.500H1205"/>
            </g>
            <!-- arco -->
            <path fill="url(#g-arch)" d="M444 613C446 538 482 492 533 454C580 420 625 403 690 403C760 403 830 445 850 488C862 512 870 530 880 545L870 530C825 472 777 455 715 455.500C660 455 605 475 553 510C515 535 484 580 477 623L470 660 444 650z"/>
            <path fill="#a06700" d="M868 524C872 532 876 539 880 545C893 563 920 578 970 589L960 600H905L905 593C892 572 882 546 868 527z"/>
            <path fill="#a36a00" d="M945 583C953 586 962 588 970 589C1030 601 1110 602 1191 598L1217 650 1190 652C1110 654 1040 651 970 636z"/>
            <path fill="#9e6600" d="M417 613L477 623C540 632 590 633 640 633C740 632 830 612 964 578L970 589 970 636C870 665 760 686 655 686C590 686 520 679 470 671L442 665z"/>
            <path fill="#7b4f00" d="M444 618L470 671 470 702 444 647z"/>
            <g class="edge">
                <path d="M444 647V613C446 538 482 492 533 454C580 420 625 403 690 403C760 403 830 445 850 488C862 512 870 530 880 545C893 563 920 578 970 589C1030 601 1110 602 1191 598L1217 650"/>
                <path d="M452 668L442 665 417 613 477 623C540 632 590 633 640 633C740 632 830 612 964 578L970 589M444 647L470 702"/>
            </g>
            <g class="blue">
                <path d="M477 623C484 580 515 535 553 510C605 475 660 455 715 455.500C777 455 825 472 870 530C882 546 892 572 905 593"/>
                <path d="M1217 650L1190 652C1110 654 1040 651 970 636C870 665 760 686 655 686C590 686 520 679 469 671L468 702"/>
            </g>
            <g class="dash">
                <path d="M477 623C484 580 515 535 553 510C605 475 660 455 715 455.500C777 455 825 472 870 530"/>
                <path d="M1217 650L1190 652C1110 654 1040 651 970 636C870 665 760 686 655 686C590 686 520 679 469 671"/>
            </g>
            <g class="linep faint">
                <path d="M535 451.500H822M492 490L442 655M512 476L452 668M466 646.500H970M1167 602L1153 650M1206 622L1198 650"/>
            </g>
            <g class="green">
                <path d="M454.500 670V640C456 560 490 520 523 487C585 432 650 415 707 415C775 415 825 445 850 490C862 512 868 525 875 538C888 570 915 590 970 607C1040 624 1110 630 1157 630.500H1207"/>
                <path d="M430 640.500H518C670 638 830 628 958 612"/>
            </g>
            <g fill="#32cd50"><path d="M443 654l4 2h3l4-2-1 4v3l1 4-4-1h-3l-4 1 1-4v-3z"/><path d="M1194 608l3 2h4l3-2-1 4v4l1 4-4-2h-3l-4 2 1-4v-4z"/></g>
            <!-- eixos -->
            <g fill="none"><path d="M841 552.500H862" stroke="#ff3030"/><path d="M841 552L834 538" stroke="#30ff30"/><path d="M841 552L835 571" stroke="#30f0ff"/><path d="M440 702.500H470" stroke="#ff3030" stroke-width="1.500"/><path d="M440 702L431 682" stroke="#30ff30"/><path d="M440 704L432 729" stroke="#30f0ff"/></g>
            <circle cx="862" cy="552.500" r="2" fill="#ff3030"/><circle cx="833.500" cy="538" r="3" fill="#30ff30"/><circle cx="835" cy="571" r="2.500" fill="#30f0ff"/>
            <path d="M460 699.500l8 3-8 3z" fill="#ff3030"/><path d="M431 683l3 9 4-2z" fill="#30ff30"/><path d="M434 727l0-11 4 1z" fill="#30f0ff"/>
            <g class="lbl">
                <text x="1282" y="452">SIDE</text><text x="399" y="646">TOP</text><text x="1178" y="708">DTM1</text>
                <text x="441" y="708">FRONT</text><text x="443" y="715">START_PART</text>
                <text x="474" y="699" fill="#ff3030">X</text><text x="420" y="679" fill="#30ff30">Y</text><text x="421" y="741" fill="#30f0ff">Z</text>
            </g>
            <text class="mode" x="303" y="875">插入模式</text>
        </svg>
        <div class="viewbar">
            <button aria-label="重新调整"><svg class="i"><use href="#vfit"/></svg></button>
            <button aria-label="放大"><svg class="i"><use href="#vin"/></svg></button>
            <button aria-label="缩小"><svg class="i"><use href="#vout"/></svg></button>
            <button aria-label="重画"><svg class="i"><use href="#vpaint"/></svg></button>
            <button class="menu" aria-label="显示样式"><svg class="i"><use href="#vbox"/></svg></button>
            <button class="menu" aria-label="已保存方向"><svg class="i"><use href="#vsaved"/></svg></button>
            <button aria-label="视图管理器"><svg class="i"><use href="#vcam"/></svg></button>
            <button aria-label="透视图"><svg class="i"><use href="#vpersp"/></svg></button>
            <button class="menu" aria-label="截面"><svg class="i"><use href="#vsec"/></svg></button>
            <button class="menu" aria-label="基准显示"><svg class="i"><use href="#vdatum"/></svg></button>
            <button class="on" aria-label="注释显示"><svg class="i"><use href="#vannot"/></svg></button>
            <button class="on" aria-label="旋转中心"><svg class="i"><use href="#vspin"/></svg></button>
            <button class="menu" aria-label="样式显示"><svg class="i"><use href="#vdisp"/></svg></button>
            <button aria-label="显示所有视图"><svg class="i"><use href="#vgrid"/></svg></button>
            <button aria-label="活动平面方向"><svg class="i"><use href="#vrot"/></svg></button>
            <button aria-label="下一视图"><svg class="i"><use href="#vgrid4"/></svg></button>
            <button aria-label="对称"><svg class="i"><use href="#vmirror"/></svg></button>
        </div>
    </div>
</main>

<footer>
    <div class="left">
        <button class="on" aria-label="导航器"><svg class="i"><path d="M.5.5h14v13H.5zM.5 3.500h14" fill="#fff" stroke="#aaa"/><path d="M1 5h4v10H1z" fill="#fff" stroke="#136a94"/><use href="#eye" x="7" y="8" width="9" height="8"/></svg></button>
        <button aria-label="浏览器"><svg class="i"><circle cx="8" cy="8" r="6.500" fill="#2f9fd8"/><path d="M3 4q5 0 4 4l-3 3zM9 2l4 3-3 3zM9 10l4-1-2 4z" fill="#cfefff"/><ellipse cx="8" cy="8" rx="9" ry="3.500" transform="rotate(-48 8 8)" fill="none" stroke="#777" stroke-width=".8"/></svg></button>
        <button aria-label="全屏"><svg class="i"><path d="M.5.5h15v15H.5z" fill="#e6f2f7" stroke="#136a94"/></svg></button>
        <i class="bar"></i>
        <div class="msgs">
            <p><svg width="12" height="12"><circle cx="5" cy="6" r="2.500" fill="#136a94"/></svg>剪刀曲面层QUILT。</p>
            <p><svg width="12" height="12"><path d="M0 4h6V1l6 5-6 5V8H0z" fill="#2fa0d0" stroke="#123f57"/></svg>单击 "样式" 工具栏上的图标来创建曲线和曲面。选择 "样式" 几何或下一个工具。拖动选定的曲线进行移动 (按住 CTRL 进行复制)。</p>
        </div>
    </div>
    <div class="right">
        <i class="bar"></i><i class="bar"></i>
        <button class="find" aria-label="查找"><svg class="i"><path d="M2 2h4v4h4V2h4l2 10v3h-6V9H6v6H0v-3z" fill="url(#g-metal)" stroke="#222"/></svg><i class="down"></i></button>
        <i class="bar"></i>
        <span class="count">选择了 2 项</span>
        <div class="combo"><select aria-label="选择过滤器"><option>样式</option></select><i class="down"></i></div>
    </div>
</footer>

<!-- anotacoes sobre a tela -->
<div class="notes">
    <svg width="1339" height="1021">
        <g fill="none" stroke="#ff00ff">
            <path d="M122 398L346 276L607 272L632 291M636 306L976 308M1009 310L875 621M1012.500 308V616M1015 307L1158 311M366 330L600 328 854 325M162 443.500H188M121 820.500L168 822"/>
            <path stroke-width="2" d="M13 383h93v42H13zM26 429h129v24H26zM17 789h89v56H17z"/>
        </g>
    </svg>
    <p class="n1">这是构造两条空间曲线的过程，是俯视图中的样式<span>2</span>中的两条线通过拉伸，和样式<span>1</span>中的前视<br>图中的两条线<span>CF-68,CF-70,</span>通过相交得到的两条相交曲线。</p>
    <p class="n2">在前视图中确定两条相交线的高度</p>
    <p class="n3">这两条是前视图中的两条线。</p>
</div>
<div class="mark">
    <svg width="20" height="44"><path d="M7 0Q22 17 17 31 13 41 4 40 11 31 9 26 12 20 7 0zM3 14q8 6 7 16l-4 7q2-8-1-12 2-5-2-11z" fill="#ff6633"/></svg>
    <p><em>野火</em><b>论坛</b></p>
    <small>www.proewildfire.cn</small>
</div>

</body>
</html>
```
FILE: styles.css
```css
* {
    box-sizing: border-box;
}
body {
    margin: 0;
    height: 100vh;
    display: flex;
    flex-direction: column;
    position: relative;
    overflow: hidden;
    border: 1px solid #a0a0a0;
    border-right: 0;
    border-bottom-width: 3px;
    background-color: #f7fafc;
    color: #3c3c3c;
    font-family: "Open Sans", "Noto Sans CJK SC", sans-serif;
    font-size: 12px;
    line-height: 16px;
}
h1, h2, p, ul {
    margin: 0;
    padding: 0;
    font-weight: normal;
}
button {
    font: inherit;
    color: inherit;
    background: none;
    border: 0;
    padding: 0;
    margin: 0;
}
svg {
    display: block;
    flex: none;
}
.defs {
    position: absolute;
}
.i {
    width: 16px;
    height: 16px;
}

/* setas e separadores */
.down {
    display: inline-block;
    flex: none;
    border: 4px solid transparent;
    border-top-color: #555;
    border-bottom: 0;
}
.down.gray {
    border-top-color: #999;
}
.down.white {
    border-top-color: #fff;
}
.bar {
    flex: none;
    width: 1px;
    height: 24px;
    background-color: #aab0b0;
}

/* titulo */
.titlebar {
    flex: none;
    height: 28px;
    display: grid;
    grid-template-columns: 1fr auto 1fr;
    align-items: center;
    background-color: #dae0e0;
}
.titlebar h1 {
    font-size: 13px;
    line-height: 20px;
}
.quick {
    display: flex;
    align-items: center;
    gap: 8px;
    padding-left: 8px;
}
.brand {
    width: 51px;
    margin-left: -4px;
    padding-bottom: 3px;
    font-family: Inter, sans-serif;
    font-size: 18px;
    line-height: 20px;
    color: #555;
}
.brand sup {
    font-size: 6px;
    line-height: 0;
    vertical-align: 8px;
}
.quick .down {
    margin: 0 -1px 0 -2px;
}
.quick .bar {
    margin-left: -4px;
}
.quick .over {
    margin-left: 0;
    border-top-color: #222;
}
.winbtns {
    display: flex;
    justify-content: flex-end;
    gap: 17px;
    padding-right: 6px;
}

/* abas */
.tabs {
    flex: none;
    height: 29px;
    display: flex;
    background-color: #3e4646;
    font-size: 13px;
    color: #fff;
}
.tabs button {
    padding: 0 24px 0 23px;
}
.tabs .file {
    padding: 0 20px;
    background: linear-gradient(#63cc42, #49a536);
}
.tabs .active {
    margin-left: 8px;
    background-color: #f7f9fb;
    color: #333;
    font-style: italic;
}
.help {
    display: flex;
    align-items: center;
    gap: 11px;
    margin-left: auto;
    padding: 0 2px 4px 0;
}

/* faixa de opcoes */
.ribbon {
    flex: none;
    height: 113px;
    display: flex;
    background-color: #f8f9fb;
    border-bottom: 1px solid #b0baba;
}
.group {
    display: flex;
    flex-direction: column;
    margin: 1px 0 2px;
    border-right: 1px solid #b4b8b8;
}
.tools {
    flex: none;
    display: flex;
    height: 85px;
}
.group h2 {
    display: flex;
    justify-content: center;
    align-items: center;
    gap: 3px;
    font-size: 12px;
    line-height: 24px;
}
.col {
    display: flex;
    flex-direction: column;
    margin-right: 8px;
}
.col button {
    display: flex;
    flex: none;
    align-items: center;
    gap: 4px;
    height: 28px;
    white-space: nowrap;
}
.big {
    display: flex;
    flex-direction: column;
    align-items: center;
    padding-top: 5px;
    line-height: 32px;
    white-space: nowrap;
}
.g-op .col {
    margin: 0 7px;
}
.g-plane .big {
    width: 86px;
}
.g-curve .big, .g-surf .big, .g-ana .big {
    width: 46px;
}
.g-close .big {
    width: 40px;
}
.g-curve .col {
    margin: 0 10px 0 1px;
}
.g-curve .col + .col {
    margin: 0 7px 0 0;
}
.g-close {
    padding: 0 3px;
}

/* painel lateral */
main {
    flex: 1;
    min-height: 0;
    display: flex;
}
aside {
    flex: none;
    width: 294px;
    display: flex;
    flex-direction: column;
    background-color: #dae0e0;
}
.sidetabs {
    display: flex;
    height: 26px;
}
.sidetabs button {
    width: 32px;
    padding: 0 7px;
}
.sidetabs .on {
    padding: 0 9px;
}
.sidetabs .on, .panels {
    background-color: #f7fafc;
}
.panels {
    flex: 1;
    min-height: 0;
    display: flex;
    flex-direction: column;
    margin-right: 3px;
    padding-bottom: 4px;
}
.bar-tools {
    flex: none;
    display: flex;
    align-items: center;
    height: 32px;
    padding-left: 13px;
}
.bar-tools > .i {
    margin-left: 6px;
}
.bar-tools button {
    display: flex;
    align-items: center;
    justify-content: center;
    width: 24px;
    height: 24px;
}
.bar-tools .bar {
    margin: 0 4px;
}
.tri {
    border-width: 5px;
    border-top: 8px solid #888;
    border-bottom: 0;
}
.grip {
    height: 16px;
    margin: 0 17px 0 6px;
    border-left: 2px dotted #aaa;
}
.split .grip {
    margin-right: 20px;
}
.more {
    width: 31px;
    padding-left: 8px;
    text-align: center;
    font-size: 16px;
}
.split .more {
    width: 33px;
    padding-left: 15px;
}
.split .last {
    margin-left: 2px;
}
.on {
    background-color: #dfe1e3;
    border: 1px solid #a8acb0;
}
.sidetabs .on {
    border: 0;
}
.split {
    height: 35px;
    border-top: 3px solid #dae0e0;
    margin-right: 5px;
    margin-left: 8px;
    padding-left: 5px;
}
.search {
    flex: none;
    display: flex;
    align-items: center;
    height: 34px;
    padding: 0 11px 5px 12px;
}
.box {
    display: flex;
    width: 211px;
    height: 29px;
    margin: 0 6px 0 4px;
    border: 1px solid #a8b2b4;
    background-color: #fff;
}
.box input {
    flex: 1;
    min-width: 0;
    border: 0;
    background: none;
}
.box button {
    width: 18px;
    font-size: 18px;
    color: #999;
}
.plus {
    margin-left: 11px;
}
.pane {
    flex: none;
    display: flex;
    justify-content: space-between;
    overflow: hidden;
    padding-right: 5px;
    background-color: #f9fafc;
}
.pane1 {
    height: 204px;
    align-items: flex-end;
}
.pane2 {
    height: 120px;
}
.pane2 .tree {
    padding-top: 2px;
}
.pane3 {
    flex: 1;
}
.tree {
    flex: 1;
    list-style: none;
    font-size: 13px;
}
.tree li {
    display: flex;
    align-items: center;
    height: 22px;
}
.pane2 .tree li {
    height: 20px;
}
.tree li span {
    margin-left: 4px;
    padding: 0 1px;
    line-height: 21px;
    white-space: nowrap;
}
.pane2 .tree li span {
    margin-left: 8px;
    line-height: 20px;
}
.tree .zh {
    font-size: 12px;
}
.tree .sel {
    background-color: #b0e2ff;
}
.tree .focus {
    outline: 1px dotted #333;
    outline-offset: -1px;
}
.tree .dim {
    color: #b8ad93;
}
.tree .root {
    padding-left: 11px;
}
.twig {
    flex: none;
    display: flex;
    align-items: center;
    width: 31px;
    height: 100%;
    background: linear-gradient(#c0c0c0, #c0c0c0) 19px 0 / 1px 100% no-repeat,
                linear-gradient(#c0c0c0, #c0c0c0) 19px 50% / 9px 1px no-repeat;
}
.twig.closed, .twig.opened {
    background: none;
}
.twig.closed::after {
    content: "";
    margin-left: 17px;
    border: 4px solid transparent;
    border-left: 5px solid #444;
    border-right: 0;
}
.twig.opened::after {
    content: "";
    margin-left: 15px;
    border: 4px solid transparent;
    border-top: 5px solid #444;
    border-bottom: 0;
}
.sub {
    padding-left: 20px;
    background: linear-gradient(#c0c0c0, #c0c0c0) 19px 0 / 1px 100% no-repeat;
}
/* linha de insercao com pontas */
.tree .insert {
    justify-content: space-between;
    height: 6px;
    margin: 5px 0 6px 11px;
    background: linear-gradient(#48c02c, #48c02c) 0 50% / 100% 2px no-repeat;
}
.insert::before, .insert::after {
    content: "";
    border: 3px solid transparent;
    border-left-color: #48c02c;
    border-right: 0;
}
.insert::after {
    border-right: 3px solid #48c02c;
    border-left: 0;
}
.scroll {
    flex: none;
    display: flex;
    flex-direction: column;
    align-self: stretch;
    width: 15px;
    background-color: #dddfe1;
}
.btn, .thumb {
    border: 1px solid #c8cccc;
    background-color: #f8f9f9;
}
.btn {
    display: flex;
    align-items: center;
    justify-content: center;
    height: 15px;
}
.btn::after {
    content: "";
    border: 4px solid transparent;
}
.up::after {
    border-top: 0;
    border-bottom: 5px solid #999;
}
.dn {
    margin-top: auto;
}
.dn::after {
    border-bottom: 0;
    border-top: 5px solid #999;
}
.pane1 .thumb {
    height: 126px;
    margin-top: 34px;
}
.pane2 .thumb {
    height: 34px;
    margin-top: 6px;
}
.pane3 .thumb {
    height: 90px;
}
.path {
    flex: none;
    display: flex;
    align-items: center;
    height: 24px;
    margin: 0 5px 0 8px;
    border: 1px solid #c4caca;
    background-color: #f7f8f9;
}
.path button {
    width: 24px;
    height: 22px;
    padding-left: 3px;
    border-right: 1px solid #c4caca;
    background-color: #eaecee;
}
select {
    appearance: none;
    flex: 1;
    height: 100%;
    border: 0;
    background: none;
    font: inherit;
    color: inherit;
    opacity: 1;
}
.path select {
    padding: 0 6px;
    border-right: 1px solid #c4caca;
    color: #aaa;
}
.path .down {
    margin: 0 3px;
}

/* area grafica */
.viewport {
    flex: 1;
    min-width: 0;
    position: relative;
    display: flex;
    justify-content: center;
    align-items: flex-start;
    padding-left: 6px;
    background-color: #fff;
}
.scene {
    position: absolute;
    left: 0;
    top: 0;
    width: 100%;
    height: 100%;
}
.fillp {
    fill: rgba(141, 84, 12, .07);
}
.linep {
    fill: none;
    stroke: #996633;
}
.faint {
    opacity: .6;
}
.edge {
    fill: none;
    stroke: #222;
}
.blue {
    fill: none;
    stroke: #1010e0;
}
.dash {
    fill: none;
    stroke: #222;
    stroke-dasharray: 9 5;
}
.green {
    fill: none;
    stroke: #2fd24f;
}
.lbl {
    font-family: "Liberation Mono", monospace;
    font-size: 15px;
    fill: #996633;
}
.mode {
    font-size: 8px;
    fill: #222;
}
.viewbar {
    position: relative;
    display: flex;
    margin-top: 7px;
    padding: 2px;
    border: 1px solid #a0a4a6;
    background-color: #f8fafc;
}
.viewbar button {
    display: flex;
    align-items: center;
    justify-content: center;
    width: 24px;
    height: 24px;
    margin: 1px;
}
.viewbar .menu {
    background: linear-gradient(135deg, transparent 50%, #444 50%) right bottom / 4px 4px no-repeat;
}

/* barra de status */
footer {
    flex: none;
    height: 48px;
    display: flex;
    justify-content: space-between;
    border-top: 1px solid #b0baba;
}
.left, .right {
    display: flex;
    align-items: center;
    padding-top: 13px;
}
.left {
    gap: 3px;
    padding-left: 5px;
}
.left > button {
    display: flex;
    align-items: center;
    justify-content: center;
    width: 23px;
    height: 24px;
}
.left > .bar {
    margin: 0 0 0 7px;
}
.msgs {
    padding-bottom: 9px;
    font-size: 11px;
}
.msgs p {
    display: flex;
    align-items: center;
    gap: 1px;
    white-space: nowrap;
}
.right {
    gap: 3px;
    padding-right: 12px;
    padding-top: 12px;
}
.find {
    display: flex;
    align-items: center;
    gap: 8px;
    height: 24px;
    padding: 0 3px 0 5px;
    border: 1px solid #b0b6b6;
    background-color: #f9f9f9;
}
.count {
    width: 90px;
}
.combo {
    display: flex;
    align-items: center;
    width: 177px;
    height: 25px;
    padding-right: 4px;
    border: 1px solid #b0b6b6;
    background-color: #f9f9f9;
}
.combo select {
    padding: 0 6px;
}

/* anotacoes */
.notes, .mark {
    position: absolute;
    pointer-events: none;
}
.notes {
    left: -1px;
    top: -1px;
    font-family: "Noto Sans CJK SC", sans-serif;
    font-weight: 300;
    font-size: 20px;
    line-height: 20px;
    color: #ff20ff;
    white-space: nowrap;
}
.notes p {
    position: absolute;
}
.notes span {
    font-family: "Liberation Mono", monospace;
    font-size: 17px;
    line-height: 0;
}
.notes .n1 {
    left: 354px;
    top: 287px;
    color: #ff3010;
}
.n2 {
    left: 193px;
    top: 434px;
}
.n3 {
    left: 165px;
    top: 808px;
}
.mark {
    right: 18px;
    bottom: 6px;
    width: 168px;
}
.mark svg {
    position: absolute;
    left: 62px;
    top: -1px;
}
.mark p {
    display: flex;
    justify-content: space-between;
    font-size: 39px;
    line-height: 44px;
    font-weight: 400;
    font-style: italic;
    padding-top: 16px;
}
.mark em {
    color: #ff6633;
}
.mark b {
    font-weight: 400;
    color: #111;
}
.mark small {
    display: block;
    font-family: Inter, sans-serif;
    font-style: italic;
    font-size: 16px;
    line-height: 16px;
    color: #999;
}
```
